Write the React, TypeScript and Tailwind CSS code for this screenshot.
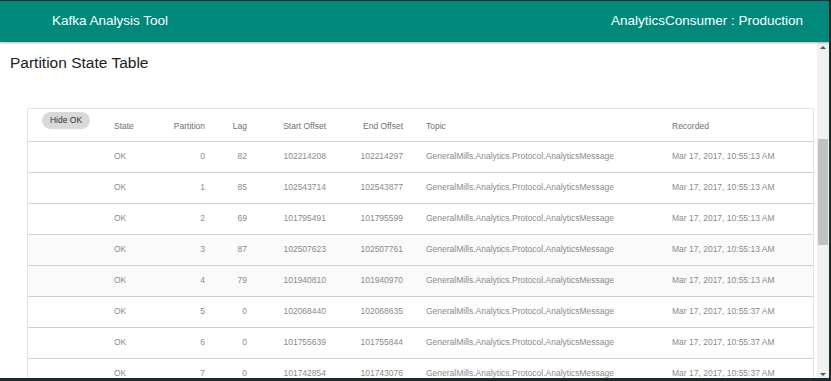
const rows = [
  { p: 0, lag: 82, start: '102214208', end: '102214297', time: '10:55:13' },
  { p: 1, lag: 85, start: '102543714', end: '102543877', time: '10:55:13' },
  { p: 2, lag: 69, start: '101795491', end: '101795599', time: '10:55:13' },
  { p: 3, lag: 87, start: '102507623', end: '102507761', time: '10:55:13' },
  { p: 4, lag: 79, start: '101940810', end: '101940970', time: '10:55:13' },
  { p: 5, lag: 0, start: '102068440', end: '102068635', time: '10:55:37' },
  { p: 6, lag: 0, start: '101755639', end: '101755844', time: '10:55:37' },
  { p: 7, lag: 0, start: '101742854', end: '101743076', time: '10:55:37' },
  { p: 8, lag: 0, start: '101803117', end: '101803290', time: '10:55:37' },
];

const topic = 'GeneralMills.Analytics.Protocol.AnalyticsMessage';

const App = () => {
  return (
    <div className="h-[381px] w-full flex flex-col overflow-hidden bg-white border-t border-r-2 border-b-[3px] border-[#1e2a2c] font-['Liberation_Sans',Arial,sans-serif]">
      {/* Top bar */}
      <header className="relative z-10 h-[41px] shrink-0 flex items-center justify-between bg-[#00897b] pl-[52px] pr-[26px] text-white shadow-[0_1px_2px_rgba(0,0,0,0.3)]">
        <span className="text-[13.5px]">Kafka Analysis Tool</span>
        <span className="text-[13.5px]">AnalyticsConsumer : Production</span>
      </header>

      <div className="flex flex-1 min-h-0">
        <main className="flex-1 min-w-0 overflow-hidden pt-[11px]">
          <h1 className="pl-[10px] text-[15.5px] leading-[20px] text-[#212121]">Partition State Table</h1>

          <div className="mt-[35px] ml-[27px] mr-[3px] border border-[#e4e4e4]">
            <table className="w-full table-fixed border-collapse text-[8.5px]">
              <colgroup>
                <col className="w-[76px]" />
                <col className="w-[56px]" />
                <col className="w-[55px]" />
                <col className="w-[42px]" />
                <col className="w-[79px]" />
                <col className="w-[77px]" />
                <col className="w-[249px]" />
                <col />
              </colgroup>
              <thead>
                <tr className="h-[32px] text-[#707070]">
                  <th className="border-b border-[#d2d2d2] align-top pt-[3px] pl-[14px] text-left font-normal">
                    <button className="h-[17px] w-[48px] rounded-full bg-[#d9d9d9] text-[8.5px] text-[#333]">Hide OK</button>
                  </th>
                  <th className="border-b border-[#d2d2d2] align-bottom pb-[8px] pl-[10px] text-left font-normal">State</th>
                  <th className="border-b border-[#d2d2d2] align-bottom pb-[8px] pr-[10px] text-right font-normal">Partition</th>
                  <th className="border-b border-[#d2d2d2] align-bottom pb-[8px] pr-[10px] text-right font-normal">Lag</th>
                  <th className="border-b border-[#d2d2d2] align-bottom pb-[8px] pr-[10px] text-right font-normal">Start Offset</th>
                  <th className="border-b border-[#d2d2d2] align-bottom pb-[8px] pr-[10px] text-right font-normal">End Offset</th>
                  <th className="border-b border-[#d2d2d2] align-bottom pb-[8px] pl-[13px] text-left font-normal">Topic</th>
                  <th className="border-b border-[#d2d2d2] align-bottom pb-[8px] pl-[10px] text-left font-normal">Recorded</th>
                </tr>
              </thead>
              <tbody className="text-[#8a8a8a]">
                {rows.map((r) => (
                  <tr key={r.p} className={r.p === 3 || r.p === 4 ? 'h-[31px] bg-[#fafafa]' : 'h-[31px]'}>
                    <td className="border-b border-[#d2d2d2]"></td>
                    <td className="border-b border-[#d2d2d2] pl-[10px]">OK</td>
                    <td className="border-b border-[#d2d2d2] pr-[10px] text-right">{r.p}</td>
                    <td className="border-b border-[#d2d2d2] pr-[10px] text-right">{r.lag}</td>
                    <td className="border-b border-[#d2d2d2] pr-[10px] text-right">{r.start}</td>
                    <td className="border-b border-[#d2d2d2] pr-[10px] text-right">{r.end}</td>
                    <td className="border-b border-[#d2d2d2] pl-[13px] whitespace-nowrap">{topic}</td>
                    <td className="border-b border-[#d2d2d2] pl-[10px] whitespace-nowrap">Mar 17, 2017, {r.time} AM</td>
                  </tr>
                ))}
              </tbody>
            </table>
          </div>
        </main>

        {/* Scrollbar */}
        <div className="w-[12px] shrink-0 flex flex-col bg-[#f1f1f1]">
          <div className="h-[10px] flex items-center justify-center">
            <div className="w-0 h-0 border-l-[3px] border-r-[3px] border-b-[3px] border-l-transparent border-r-transparent border-b-[#555]" />
          </div>
          <div className="h-[87px]" />
          <div className="h-[106px] mx-[1px] bg-[#c1c1c1]" />
          <div className="flex-1" />
          <div className="h-[8px] flex items-center justify-center">
            <div className="w-0 h-0 border-l-[3px] border-r-[3px] border-t-[3px] border-l-transparent border-r-transparent border-t-[#555]" />
          </div>
        </div>
      </div>
    </div>
  );
};

export default App;
